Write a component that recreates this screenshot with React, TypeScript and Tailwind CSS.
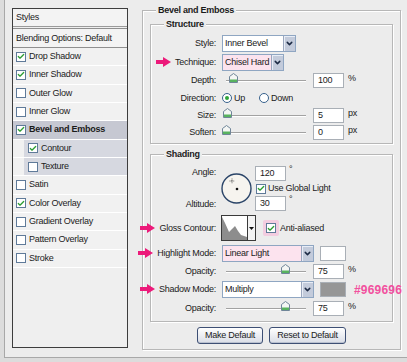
import { Check, ChevronDown } from "lucide-react";

type StyleRow = {
    label: string;
    checked: boolean;
    bold?: boolean;
    sub?: boolean;
    active?: boolean;
};

const styleRows: StyleRow[] = [
    { label: "Drop Shadow", checked: true },
    { label: "Inner Shadow", checked: true },
    { label: "Outer Glow", checked: false },
    { label: "Inner Glow", checked: false },
    { label: "Bevel and Emboss", checked: true, bold: true, active: true },
    { label: "Contour", checked: true, sub: true },
    { label: "Texture", checked: false, sub: true },
    { label: "Satin", checked: false },
    { label: "Color Overlay", checked: true },
    { label: "Gradient Overlay", checked: false },
    { label: "Pattern Overlay", checked: false },
    { label: "Stroke", checked: false },
];

function CheckBox({ checked }: { checked: boolean }) {
    return (
        <span className="flex items-center justify-center w-[10px] h-[10px] border border-[#5f7a99] bg-white shrink-0">
            {checked && (
                <Check size={9} strokeWidth={4} className="text-[#2e9e35]" />
            )}
        </span>
    );
}

function PinkArrow() {
    return (
        <svg
            width="15"
            height="10"
            viewBox="0 0 15 10"
            className="absolute right-full mr-[4px] top-1/2 -translate-y-1/2"
        >
            <path d="M0 3H7V0L15 5L7 10V7H0Z" fill="#ec1a7a" />
        </svg>
    );
}

function Label({ text, arrow }: { text: string; arrow?: boolean }) {
    return (
        <div className="w-[65px] shrink-0 text-right whitespace-nowrap">
            <span className="relative">
                {arrow && <PinkArrow />}
                {text}
            </span>
        </div>
    );
}

function DropButton() {
    return (
        <span className="flex items-center justify-center w-[12px] h-full shrink-0 bg-[#c3cbdb] border-l border-[#9aa6bd] shadow-[inset_1px_1px_0_#e8edf6]">
            <ChevronDown size={9} strokeWidth={4} className="text-[#1d2b45]" />
        </span>
    );
}

function Select({ value, className }: { value: string; className: string }) {
    return (
        <div className={`flex shrink-0 h-[17px] border border-[#8fa6c2] ${className}`}>
            <span className="flex-1 flex items-center pl-[2px] whitespace-nowrap overflow-hidden">
                {value}
            </span>
            <DropButton />
        </div>
    );
}

function NumInput({ value }: { value: string }) {
    return (
        <div className="flex items-center w-[31px] h-[15px] pl-[4px] border border-[#a9afb6] bg-white">
            {value}
        </div>
    );
}

function Thumb() {
    return (
        <svg width="9" height="10" viewBox="0 0 9 10">
            <path
                d="M4.5 0.5L8.5 3.5V9.5H0.5V3.5Z"
                fill="#f4f6f4"
                stroke="#6f8598"
            />
            <rect x="1" y="6.5" width="7" height="2.5" fill="#58b35f" />
        </svg>
    );
}

function Slider({ at }: { at: number }) {
    return (
        <div className="relative flex items-center ml-[4px] w-[80px] h-[12px]">
            <div className="w-full h-[1px] bg-[#a2a2a2] shadow-[0_1px_0_#ffffff]" />
            <span className="absolute top-[-2px]" style={{ left: at - 4 }}>
                <Thumb />
            </span>
        </div>
    );
}

function Radio({ on, text, className }: { on: boolean; text: string; className?: string }) {
    return (
        <div className={`flex items-center gap-[2px] ${className ?? ""}`}>
            <span className="flex items-center justify-center w-[10px] h-[10px] rounded-full border border-[#37618c] bg-white">
                {on && <span className="w-[4px] h-[4px] rounded-full bg-[#2fa53a]" />}
            </span>
            {text}
        </div>
    );
}

function Group({
    title,
    className,
    children,
}: {
    title: string;
    className: string;
    children: React.ReactNode;
}) {
    return (
        <div
            className={`flex flex-col border border-[#b7b7b7] shadow-[inset_1px_1px_0_#ffffff,1px_1px_0_#ffffff] ${className}`}
        >
            <div className="-mt-[7px] ml-[13px] h-[12px] leading-[12px] px-[2px] w-fit bg-[#ececec] font-bold">
                {title}
            </div>
            {children}
        </div>
    );
}

function StylesList() {
    return (
        <div className="flex flex-col w-[116px] h-[340px] border border-[#3d3d3d] bg-[#efefef]">
            <div className="flex items-center h-[18px] px-[3px] border-b border-[#9a9a9a] bg-[#f3f3f3]">
                Styles
            </div>
            <div className="flex items-center mt-[1px] h-[20px] px-[3px] border-y border-[#8f8f8f] bg-[#f3f3f3] whitespace-nowrap">
                Blending Options: Default
            </div>
            <div className="grid grid-rows-12 h-[220px]">
                {styleRows.map((row) => (
                    <div
                        key={row.label}
                        className={`flex border-b border-white ${
                            row.active ? "bg-[#c6c8d2]" : "bg-[#f1f1f1]"
                        }`}
                    >
                        <div
                            className={`flex flex-1 items-center gap-[3px] whitespace-nowrap ${
                                row.sub
                                    ? "ml-[11px] pl-[4px] bg-[#d6d8e0]"
                                    : "pl-[3px]"
                            } ${row.bold ? "font-bold" : ""}`}
                        >
                            <CheckBox checked={row.checked} />
                            {row.label}
                        </div>
                    </div>
                ))}
            </div>
        </div>
    );
}

function AngleDial() {
    return (
        <svg width="31" height="31" viewBox="0 0 31 31" className="mt-[7px] ml-[5px] shrink-0">
            <circle cx="15.5" cy="15.5" r="14.5" fill="#f6f4ef" stroke="#2a4468" strokeWidth="1.4" />
            <path d="M11 5.5V10.5M8.5 8H13.5" stroke="#444" strokeWidth="0.8" strokeDasharray="1 0.6" />
            <circle cx="16" cy="16" r="1.3" fill="#111" />
        </svg>
    );
}

function ContourPicker() {
    return (
        <div className="flex w-[35px] h-[26px] border border-[#3a3a3a] bg-white">
            <svg width="25" height="24" viewBox="0 0 25 24" className="shrink-0">
                <path
                    d="M0 1L3 7L7 16L10 13L13 10L16 15L19 19L25 21V24H0Z"
                    fill="#8d8d8d"
                />
            </svg>
            <span className="flex flex-1 items-center justify-center border-l border-[#3a3a3a] bg-[#f3f3f3]">
                <svg width="5" height="3" viewBox="0 0 5 3">
                    <path d="M0 0H5L2.5 3Z" fill="#111" />
                </svg>
            </span>
        </div>
    );
}

function SliderField({ at, value, unit }: { at: number; value: string; unit: string }) {
    return (
        <div className="flex items-center">
            <Slider at={at} />
            <div className="ml-[7px]">
                <NumInput value={value} />
            </div>
            <span className="ml-[4px] -mt-[4px]">{unit}</span>
        </div>
    );
}

function BevelPanel() {
    return (
        <div className="flex flex-col w-[259px] h-[340px] mt-[2px] px-[7px] border border-[#b7b7b7] shadow-[inset_1px_1px_0_#ffffff,1px_1px_0_#ffffff]">
            <div className="-mt-[7px] ml-[6px] h-[12px] leading-[12px] px-[2px] w-fit bg-[#ececec] font-bold">
                Bevel and Emboss
            </div>

            <Group title="Structure" className="mt-[8px] h-[120px]">
                <div className="flex flex-col mt-[4px]">
                    <div className="flex items-center gap-[6px] h-[19px]">
                        <Label text="Style:" />
                        <Select value="Inner Bevel" className="w-[74px] bg-white" />
                    </div>
                    <div className="flex items-center gap-[6px] h-[19px]">
                        <Label text="Technique:" arrow />
                        <Select value="Chisel Hard" className="w-[62px] bg-[#fce3ee]" />
                    </div>
                    <div className="flex items-center gap-[6px] h-[17px]">
                        <Label text="Depth:" />
                        <SliderField at={7} value="100" unit="%" />
                    </div>
                    <div className="flex items-center gap-[6px] h-[18px]">
                        <Label text="Direction:" />
                        <Radio on text="Up" />
                        <Radio on={false} text="Down" className="ml-[8px]" />
                    </div>
                    <div className="flex items-center gap-[6px] h-[17px]">
                        <Label text="Size:" />
                        <SliderField at={1} value="5" unit="px" />
                    </div>
                    <div className="flex items-center gap-[6px] h-[17px]">
                        <Label text="Soften:" />
                        <SliderField at={0} value="0" unit="px" />
                    </div>
                </div>
            </Group>

            <Group title="Shading" className="mt-[10px] h-[168px]">
                <div className="flex h-[45px] mt-[6px]">
                    <div className="flex flex-col justify-between w-[65px] shrink-0 text-right">
                        <div className="flex items-center justify-end h-[13px]">Angle:</div>
                        <div className="flex items-center justify-end h-[13px]">Altitude:</div>
                    </div>
                    <AngleDial />
                    <div className="flex flex-col ml-[3px]">
                        <div className="flex">
                            <NumInput value="120" />
                            <span className="ml-[3px] -mt-[1px]">°</span>
                        </div>
                        <div className="flex items-center gap-[2px] h-[15px] ml-[1px] whitespace-nowrap">
                            <CheckBox checked />
                            Use Global Light
                        </div>
                        <div className="flex">
                            <NumInput value="30" />
                            <span className="ml-[3px] -mt-[1px]">°</span>
                        </div>
                    </div>
                </div>

                <div className="flex items-center h-[26px] mt-[4px]">
                    <Label text="Gloss Contour:" arrow />
                    <div className="ml-[5px]">
                        <ContourPicker />
                    </div>
                    <div className="flex items-center ml-[7px] p-[3px] rounded-[2px] bg-[#f3cde0]">
                        <CheckBox checked />
                    </div>
                    <span className="ml-[1px]">Anti-aliased</span>
                </div>

                <div className="flex items-center gap-[6px] h-[18px] mt-[3px]">
                    <Label text="Highlight Mode:" arrow />
                    <Select value="Linear Light" className="w-[92px] bg-[#fce3ee]" />
                    <span className="shrink-0 w-[26px] h-[15px] border border-[#a9afb6] bg-white" />
                </div>
                <div className="flex items-center gap-[6px] h-[17px] mt-[1px]">
                    <Label text="Opacity:" />
                    <SliderField at={59} value="75" unit="%" />
                </div>
                <div className="flex items-center gap-[6px] h-[17px] mt-[1px]">
                    <Label text="Shadow Mode:" arrow />
                    <Select value="Multiply" className="w-[92px] bg-white" />
                    <span className="shrink-0 w-[26px] h-[15px] border border-[#a9afb6] bg-[#969696]" />
                    <span className="shrink-0 ml-[2px] text-[12px] font-bold tracking-[0.2px] text-[#f2509e]">
                        #969696
                    </span>
                </div>
                <div className="flex items-center gap-[6px] h-[17px] mt-[2px]">
                    <Label text="Opacity:" />
                    <SliderField at={59} value="75" unit="%" />
                </div>
            </Group>

            <div className="flex justify-center gap-[6px] mt-[5px]">
                <button className="w-[66px] h-[17px] rounded-[3px] border border-[#3d4f74] bg-gradient-to-b from-white to-[#d9dde6] shadow-[inset_0_-1px_0_#b9c0cf] whitespace-nowrap">
                    Make Default
                </button>
                <button className="w-[77px] h-[17px] rounded-[3px] border border-[#3d4f74] bg-gradient-to-b from-white to-[#d9dde6] shadow-[inset_0_-1px_0_#b9c0cf] whitespace-nowrap">
                    Reset to Default
                </button>
            </div>
        </div>
    );
}

export default function App() {
    return (
        <div className="w-[407px] h-[362px] overflow-hidden bg-[#dcdcdc] font-['Liberation_Sans',Arial,sans-serif] text-[9px] leading-none tracking-[-0.25px] text-[#1b1b1b]">
            <div className="flex gap-[14px] h-[358px] ml-[4px] pl-[7px] pt-[8px] bg-[#ececec] border-l border-b border-[#a8a8a8]">
                <StylesList />
                <BevelPanel />
            </div>
        </div>
    );
}
